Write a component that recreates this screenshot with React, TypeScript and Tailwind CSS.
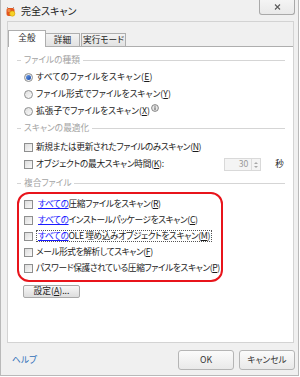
import React from "react";

const Key = ({ k }: { k: string }) => (
  <span>
    (<span className="underline underline-offset-[1px]">{k}</span>)
  </span>
);

const Check = () => (
  <span className="w-[9px] h-[9px] shrink-0 border border-[#8e8f8f] bg-gradient-to-br from-[#dcdcdc] to-[#fafafa]" />
);

const Radio = ({ on }: { on?: boolean }) => (
  <span className="w-[9px] h-[9px] shrink-0 rounded-full border border-[#8e8f8f] bg-gradient-to-br from-[#dedede] to-[#fbfbfb] flex items-center justify-center">
    {on && <span className="w-[5px] h-[5px] rounded-full bg-gradient-to-br from-[#6a9be6] to-[#1547a8]" />}
  </span>
);

const Group = ({ label }: { label: string }) => (
  <div className="h-[17px] flex items-center gap-[3px] text-[#a3a3a3]">
    <span className="w-[4px] h-px bg-[#d5d5d5]" />
    <span>{label}</span>
    <span className="flex-1 h-px bg-[#d5d5d5]" />
  </div>
);

const Link = () => <span className="text-[#1a1aff] underline underline-offset-[1px]">すべての</span>;

function BugIcon() {
  return (
    <svg width="11" height="11" viewBox="0 0 11 11">
      <path d="M2 1 L3.5 2.5 M9 1 L7.5 2.5" stroke="#888" strokeWidth="0.8" />
      <rect x="1.5" y="2" width="8" height="8" rx="2" fill="#e2561e" />
      <rect x="2.5" y="3" width="3" height="3" rx="1" fill="#f08a4a" />
      <circle cx="7.3" cy="7.6" r="2.6" fill="#f6d22a" stroke="#d9a406" strokeWidth="0.6" />
    </svg>
  );
}

export default function App() {
  return (
    <div className="w-[300px] h-[377px] bg-white">
      <div className="w-[299px] h-[376px] bg-[#f0f0f0] border-x border-b border-[#b9b9b9] font-['Noto_Sans_CJK_JP',sans-serif] [font-feature-settings:'palt'] text-[8.7px] leading-none whitespace-nowrap text-[#1b1b1b] flex flex-col">
        {/* title bar */}
        <div className="h-[20px] flex items-start shrink-0">
          <div className="pl-[4px] pt-[6px]">
            <BugIcon />
          </div>
          <span className="ml-[5px] mt-[6px] text-[10px]">完全スキャン</span>
          <div className="ml-auto mr-[3px] w-[36px] h-[15px] border border-t-0 border-[#a9a9a9] rounded-b-[3px] bg-gradient-to-b from-[#f4f4f4] to-[#e9e9e9] flex items-center justify-center">
            <svg width="7" height="6" viewBox="0 0 7 6">
              <path d="M1 0.5 L6 5.5 M6 0.5 L1 5.5" stroke="#5a5a5a" strokeWidth="1.1" />
            </svg>
          </div>
        </div>

        {/* tab control */}
        <div className="mt-[1px] ml-[6px] w-[287px] h-[322px] border border-[#d3d3d3] flex flex-col">
          <div className="h-[24px] flex items-end">
            <div className="relative z-10 -mb-px w-[38px] h-[17px] bg-white border border-b-0 border-[#aeaeae] flex items-center justify-center pb-[1px]">
              全般
            </div>
            <div className="w-[34px] h-[13px] border border-b-0 border-l-0 border-[#aeaeae] bg-gradient-to-b from-[#f3f3f3] to-[#e2e2e2] flex items-center justify-center">
              詳細
            </div>
            <div className="ml-[1px] w-[45px] h-[13px] border border-b-0 border-[#aeaeae] bg-gradient-to-b from-[#f3f3f3] to-[#e2e2e2] flex items-center justify-center">
              実行モード
            </div>
          </div>

          <div className="flex-1 bg-white border-t border-[#aeaeae] pl-[9px] pr-[8px] pt-[5px] flex flex-col">
            <Group label="ファイルの種類" />
            <div className="h-[17px] flex items-center gap-[3px] pl-[7px]">
              <Radio on />
              <span className="tracking-[0.3px]">
                すべてのファイルをスキャン<Key k="E" />
              </span>
            </div>
            <div className="h-[17px] flex items-center gap-[3px] pl-[7px]">
              <Radio />
              <span>
                ファイル形式でファイルをスキャン<Key k="Y" />
              </span>
            </div>
            <div className="h-[17px] flex items-center gap-[3px] pl-[7px]">
              <Radio />
              <span>
                拡張子でファイルをスキャン<Key k="X" />
              </span>
              <svg width="8" height="8" viewBox="0 0 8 8" className="relative -top-[4px] -ml-[2px]">
                <circle cx="4" cy="4" r="3.4" fill="#e8e8e8" stroke="#7a7a7a" strokeWidth="0.9" />
                <rect x="3.5" y="3.3" width="1" height="2.8" fill="#555" />
                <rect x="3.5" y="1.8" width="1" height="0.9" fill="#555" />
              </svg>
            </div>
            <Group label="スキャンの最適化" />
            <div className="mt-[2px] h-[17px] flex items-center gap-[3px] pl-[7px]">
              <Check />
              <span className="tracking-[-0.4px]">
                新規または更新されたファイルのみスキャン<Key k="N" />
              </span>
            </div>
            <div className="h-[17px] flex items-center gap-[3px] pl-[7px]">
              <Check />
              <span className="tracking-[-0.3px]">
                オブジェクトの最大スキャン時間<Key k="K" />:
              </span>
              <div className="ml-auto flex items-center">
                <div className="w-[37px] h-[13px] border border-[#d9d9d9] bg-[#f4f4f4] flex">
                  <span className="flex-1 flex items-center justify-end pr-[3px] text-[#9a9a9a]">30</span>
                  <div className="w-[9px] border-l border-[#dcdcdc] flex flex-col items-center justify-center gap-[2px]">
                    <span className="w-0 h-0 border-x-[2px] border-x-transparent border-b-[2px] border-b-[#a8a8a8]" />
                    <span className="w-0 h-0 border-x-[2px] border-x-transparent border-t-[2px] border-t-[#a8a8a8]" />
                  </div>
                </div>
                <span className="ml-[14px] mr-[1px]">秒</span>
              </div>
            </div>
            <div className="mt-[2px]">
              <Group label="複合ファイル" />
            </div>

            <div className="w-[206px] rounded-[12px] border-2 border-[#e8141b] pl-[5px] pt-[2px] pb-[4px] flex flex-col tracking-[-0.4px]">
              <div className="h-[16px] flex items-center gap-[3px]">
                <Check />
                <span className="px-[2px]">
                  <Link />
                  圧縮ファイルをスキャン<Key k="R" />
                </span>
              </div>
              <div className="h-[16px] flex items-center gap-[3px]">
                <Check />
                <span className="px-[2px]">
                  <Link />
                  インストールパッケージをスキャン<Key k="C" />
                </span>
              </div>
              <div className="h-[16px] flex items-center gap-[3px]">
                <Check />
                <span className="px-[1px] py-[1px] border border-dotted border-[#555]">
                  <Link />
                  OLE 埋め込みオブジェクトをスキャン<Key k="M" />
                </span>
              </div>
              <div className="h-[16px] flex items-center gap-[3px]">
                <Check />
                <span>
                  メール形式を解析してスキャン<Key k="F" />
                </span>
              </div>
              <div className="h-[16px] flex items-center gap-[3px]">
                <Check />
                <span>
                  パスワード保護されている圧縮ファイルをスキャン<Key k="P" />
                </span>
              </div>
            </div>

            <div className="mt-[3px] ml-[6px] w-[57px] h-[13px] border border-[#a8a8a8] rounded-[2px] bg-gradient-to-b from-[#f7f7f7] to-[#dddddd] flex items-center justify-center">
              設定<Key k="A" />...
            </div>
          </div>
        </div>

        {/* footer */}
        <div className="mt-[7px] h-[20px] flex items-center">
          <span className="ml-[11px] text-[#2f6fb8]">ヘルプ</span>
          <div className="ml-auto mr-[3px] flex gap-[5px]">
            <div className="w-[56px] h-[20px] border border-[#b5b5b5] rounded-[3px] bg-gradient-to-b from-[#fbfbfb] to-[#e9e9e9] flex items-center justify-center text-[#333]">
              OK
            </div>
            <div className="w-[56px] h-[20px] border border-[#b5b5b5] rounded-[3px] bg-gradient-to-b from-[#fbfbfb] to-[#e9e9e9] flex items-center justify-center text-[#333]">
              キャンセル
            </div>
          </div>
        </div>
      </div>
    </div>
  );
}
